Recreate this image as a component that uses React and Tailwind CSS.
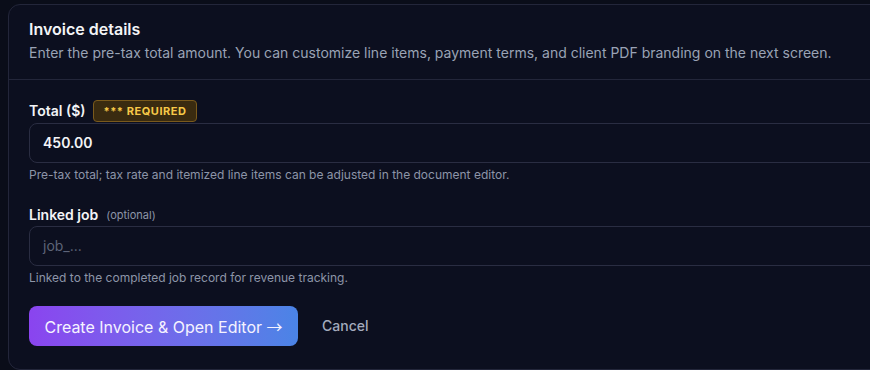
export default function App() {
  return (
    <div
      className="w-[870px] h-[370px] overflow-hidden bg-[#0a0d19] pt-[4px] pl-[8px]"
      style={{ fontFamily: 'Inter, "Noto Sans", sans-serif' }}
    >
      <div className="w-[900px] rounded-xl border border-[#23263a] bg-[#0c0f1f]">
        {/* Header */}
        <div className="px-5 pt-3 pb-4 border-b border-[#23263a]">
          <h2 className="text-base leading-6 font-semibold text-[#f3f4f6]">Invoice details</h2>
          <p className="mt-0.5 text-sm leading-5 text-[#9aa3b5]">
            Enter the pre-tax total amount. You can customize line items, payment terms, and client PDF branding on
            the next screen.
          </p>
        </div>

        {/* Body */}
        <div className="px-5 pt-5 pb-[23px]">
          <div className="flex items-center gap-2 h-[22px] mb-px">
            <label className="text-sm font-semibold text-[#f3f4f6]">Total ($)</label>
            <span className="h-[22px] flex items-center px-[9px] rounded border border-[#7a5a1c] bg-[#3a2b10] text-[11px] font-bold tracking-wider text-[#f7c948]">
              *** REQUIRED
            </span>
          </div>
          <div className="h-10 rounded-lg border border-[#2a2d42] bg-[#0c0f1f] flex items-center px-[13px] text-sm font-semibold text-[#f3f4f6]">
            450.00
          </div>
          <p className="mt-1 text-xs leading-4 text-[#8d95a8]">
            Pre-tax total; tax rate and itemized line items can be adjusted in the document editor.
          </p>

          <div className="mt-[22px] flex items-center gap-2 h-5 mb-px">
            <label className="text-sm font-semibold text-[#f3f4f6]">Linked job</label>
            <span className="text-[11px] text-[#8d95a8]">(optional)</span>
          </div>
          <div className="h-10 rounded-lg border border-[#2a2d42] bg-[#0c0f1f] flex items-center px-[13px] text-sm text-[#5d6478]">
            job_...
          </div>
          <p className="mt-1 text-xs leading-4 text-[#8d95a8]">
            Linked to the completed job record for revenue tracking.
          </p>

          <div className="mt-5 flex items-center gap-6">
            <button className="h-10 w-[269px] rounded-lg bg-gradient-to-r from-[#8a44ef] to-[#4a84e6] text-base text-[#f5f3ff]">
              Create Invoice &amp; Open Editor{' '}
              <span style={{ fontFamily: '"Noto Sans CJK JP", sans-serif' }}>→</span>
            </button>
            <button className="text-sm font-medium text-[#a3abbd]">Cancel</button>
          </div>
        </div>
      </div>
    </div>
  );
}
